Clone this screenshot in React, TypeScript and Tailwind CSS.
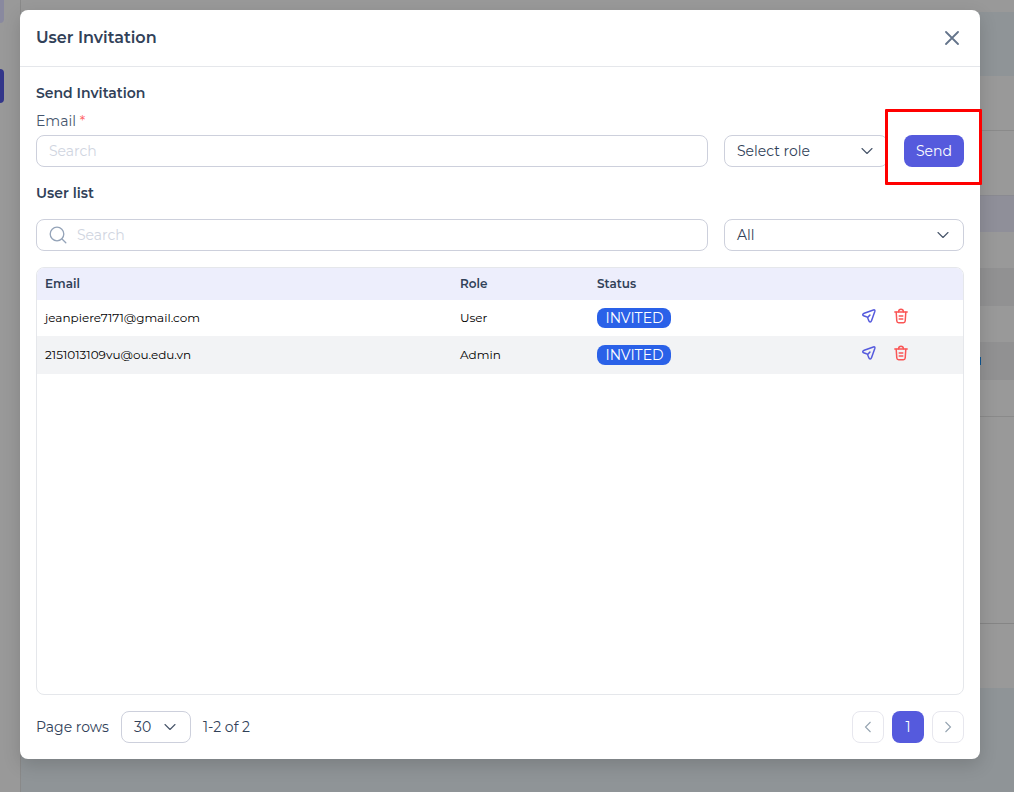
import React from 'react';
import clsx from 'clsx';

const users = [
  { email: 'jeanpiere7171@gmail.com', role: 'User', status: 'INVITED' },
  { email: '2151013109vu@ou.edu.vn', role: 'Admin', status: 'INVITED' },
];

const ChevronDown = () => (
  <svg width="12" height="8" viewBox="0 0 12 8" fill="none" stroke="#475569" strokeWidth="1.1" strokeLinecap="round" strokeLinejoin="round">
    <path d="M1 1.5 L6 6.5 L11 1.5" />
  </svg>
);

const SendIcon = () => (
  <svg width="16" height="16" viewBox="0 0 16 16" fill="none" stroke="#555add" strokeWidth="1.5" strokeLinecap="round" strokeLinejoin="round">
    <path d="M12.4 2 L3.2 5.2 C1.2 6 1.2 7.4 3.2 8 L5.5 8.8 C6.2 9 6.7 9.5 6.9 10.2 L7.7 12.4 C8.4 14.6 9.9 14.6 10.6 12.5 L13.8 3.5 C14.2 2.2 13.6 1.6 12.4 2 Z" />
    <path d="M6.8 9.2 L8.9 7.1" />
  </svg>
);

const TrashIcon = () => (
  <svg width="16" height="16" viewBox="0 0 16 16" fill="none" stroke="#fa5555" strokeWidth="1.5" strokeLinecap="round" strokeLinejoin="round">
    <path d="M1.8 4 H14.2" />
    <path d="M5.5 3.8 C5.7 2.2 6.4 1.3 8 1.3 C9.6 1.3 10.3 2.2 10.5 3.8" />
    <path d="M3.2 4.2 L3.8 13 C3.9 14.2 4.4 14.8 5.6 14.8 H10.4 C11.6 14.8 12.1 14.2 12.2 13 L12.8 4.2" />
    <path d="M6.2 8 H9.8 M6.2 11 H9.8" />
  </svg>
);

const Select = ({ label, className }: { label: string; className: string }) => (
  <button className={clsx('flex h-8 items-center justify-between rounded-lg border border-[#cdd0dc] bg-white text-sm text-slate-700', className)}>
    <span>{label}</span>
    <ChevronDown />
  </button>
);

// Page that sits dimmed under the modal
const Backdrop = () => (
  <div className="flex h-full bg-[#999999]">
    <div className="h-full w-[21px] shrink-0 border-r border-[#898989]">
      <div className="h-[23px] w-1 rounded-br-lg bg-[#89899f]" />
      <div className="mt-[46px] h-[34px] w-1 rounded-r-lg bg-[#33368a]" />
    </div>
    <div className="flex grow flex-col">
      <div className="h-3" />
      <div className="h-16 bg-[#8f9497]" />
      <div className="h-[55px] border-b border-[#8a8a8a]" />
      <div className="h-16" />
      <div className="h-[37px] border-t border-[#8a8a91] bg-[#8f8f99]" />
      <div className="h-9" />
      <div className="h-[38px] bg-[#919192]" />
      <div className="h-9" />
      <div className="flex h-[38px] items-center justify-end bg-[#919192]">
        <div className="mr-[33px] h-2 w-2 bg-[#0f5794]" />
      </div>
      <div className="h-[37px] border-b border-[#8a8a8a]" />
      <div className="h-[207px] border-b border-[#858585]" />
      <div className="h-16" />
      <div className="grow bg-[#8f9497]" />
    </div>
  </div>
);

const UserTable = () => (
  <div className="mt-4 h-[428px] overflow-hidden rounded-lg border border-gray-200">
    <div className="grid h-8 grid-cols-[415px_137px_265px_1fr] items-center bg-[#edeefc] pl-2 text-xs font-semibold text-slate-700">
      <span>Email</span>
      <span>Role</span>
      <span>Status</span>
    </div>
    {users.map((user, i) => (
      <div
        key={user.email}
        className={clsx('grid grid-cols-[415px_137px_264px_1fr] items-center pl-2 text-xs text-black', i % 2 ? 'h-[38px] bg-[#f2f3f5]' : 'h-9')}
      >
        <span>{user.email}</span>
        <span>{user.role}</span>
        <span className="flex h-5 w-[74px] items-center justify-center rounded-lg bg-[#2a61e8] pl-px text-sm text-white">
          {user.status}
        </span>
        <span className="-mt-1 flex gap-4">
          <SendIcon />
          <TrashIcon />
        </span>
      </div>
    ))}
  </div>
);

const Pagination = () => (
  <div className="mt-4 flex h-8 items-center text-sm text-slate-700">
    <span className="w-[85px]">Page rows</span>
    <Select label="30" className="w-[70px] pl-3 pr-3.5" />
    <span className="ml-3">1-2 of 2</span>
    <div className="ml-auto flex gap-2">
      <button className="flex size-8 items-center justify-center rounded-lg border border-[#e7e7ee]">
        <svg width="8" height="12" viewBox="0 0 8 12" fill="none" stroke="#94a3b0" strokeWidth="1.1"><path d="M6.5 1 L1.5 6 L6.5 11" /></svg>
      </button>
      <button className="flex size-8 items-center justify-center rounded-lg bg-[#555add] text-white">1</button>
      <button className="flex size-8 items-center justify-center rounded-lg border border-[#e7e7ee]">
        <svg width="8" height="12" viewBox="0 0 8 12" fill="none" stroke="#94a3b0" strokeWidth="1.1"><path d="M1.5 1 L6.5 6 L1.5 11" /></svg>
      </button>
    </div>
  </div>
);

const App = () => {
  return (
    <div className="relative h-screen overflow-hidden font-[Montserrat,Inter,sans-serif]">
      <Backdrop />
      <div className="absolute left-5 top-2.5 h-[749px] w-[960px] rounded-lg bg-white shadow-[0_6px_18px_rgba(0,0,0,0.15)]">
        <div className="flex h-[57px] items-center justify-between border-b border-gray-200 px-4">
          <h1 className="text-base font-semibold text-slate-700">User Invitation</h1>
          <svg className="mr-[5px]" width="14" height="14" viewBox="0 0 14 14" stroke="#64748b" strokeWidth="1.8" strokeLinecap="round">
            <path d="M1 1 L13 13 M13 1 L1 13" />
          </svg>
        </div>

        <div className="px-4 pt-4">
          <h2 className="h-5 text-sm font-semibold leading-5 text-slate-700">Send Invitation</h2>
          <label className="mt-2 block h-5 text-sm leading-5 text-slate-600">
            Email <span className="text-red-400">*</span>
          </label>
          <div className="mt-1 flex">
            <div className="flex h-8 w-[672px] items-center rounded-lg border border-[#cdd0dc] px-3 text-sm text-[#d0d5df]">
              <span>Search</span>
            </div>
            <Select label="Select role" className="ml-4 w-[164px] pl-3 pr-3.5" />
            <div className="relative ml-4 h-8 w-[60px]">
              {/* highlight around the send action */}
              <div className="absolute -left-[19px] -top-[26px] h-[76px] w-[97px] rounded-[1px] border-3 border-[#ff0000] bg-white" />
              <button className="relative h-8 w-[60px] rounded-lg bg-[#555add] text-sm text-white">Send</button>
            </div>
          </div>

          <h2 className="mt-4 h-5 text-sm font-semibold leading-5 text-slate-700">User list</h2>
          <div className="mt-4 flex gap-4">
            <div className="flex h-8 w-[672px] items-center gap-2.5 rounded-lg border border-[#cdd0dc] px-3 text-sm text-[#d0d5df]">
              <svg width="18" height="18" viewBox="0 0 18 18" fill="none" stroke="#94a3b8" strokeWidth="1.3" strokeLinecap="round">
                <circle cx="8" cy="8" r="6.8" />
                <path d="M13 13 L16.8 16.8" />
              </svg>
              <span>Search</span>
            </div>
            <Select label="All" className="w-60 pl-3 pr-3.5" />
          </div>

          <UserTable />
          <Pagination />
        </div>
      </div>
    </div>
  );
};

export default App;
